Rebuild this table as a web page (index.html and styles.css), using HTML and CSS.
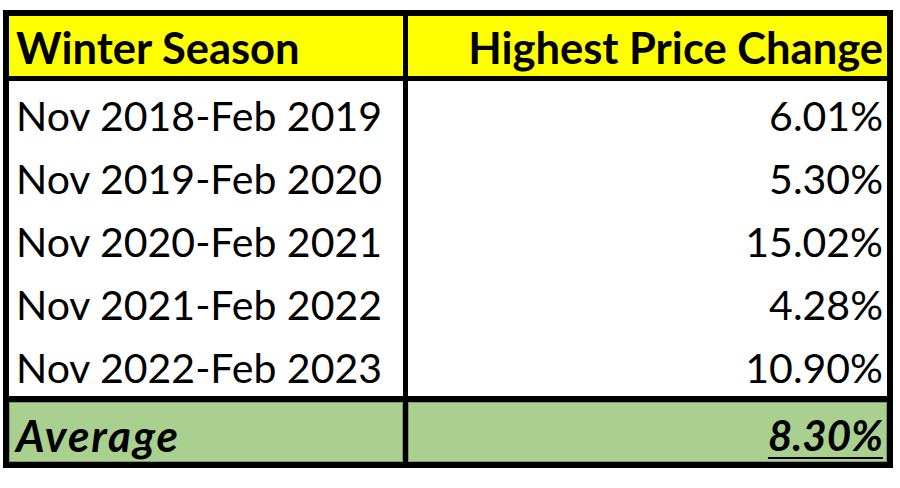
FILE: index.html
```html
<!DOCTYPE html>
<html>
<head>
<meta charset="utf-8">
<link rel="stylesheet" href="styles.css">
</head>
<body>
<div class="sheet">
  <div class="cell head left">Winter Season</div>
  <div class="cell head right">Highest Price Change</div>

  <div class="cell data left">Nov 2018-Feb 2019</div>
  <div class="cell data right">6.01%</div>
  <div class="cell data left">Nov 2019-Feb 2020</div>
  <div class="cell data right">5.30%</div>
  <div class="cell data left">Nov 2020-Feb 2021</div>
  <div class="cell data right">15.02%</div>
  <div class="cell data left">Nov 2021-Feb 2022</div>
  <div class="cell data right">4.28%</div>
  <div class="cell data left">Nov 2022-Feb 2023</div>
  <div class="cell data right">10.90%</div>

  <div class="cell avg left"><span class="avg-label">Average</span></div>
  <div class="cell avg right"><span class="ul">8.30%</span></div>
</div>
</body>
</html>
```

FILE: styles.css
```css
html, body {
  margin: 0;
  padding: 0;
  background: #ffffff;
}

body {
  padding: 10px 0 0 3px;
  font-family: "Lato", "Open Sans", sans-serif;
  color: #000;
}

.sheet {
  display: inline-grid;
  grid-template-columns: 394px 479px;
  column-gap: 5px;
  background: #000;
  border: 6px solid #000;
}

.cell {
  display: flex;
  align-items: center;
  box-sizing: border-box;
  font-size: 41px;
  line-height: 1;
  padding-top: 6px;
  white-space: nowrap;
}

.left {
  justify-content: flex-start;
  padding-left: 7px;
}

.right {
  justify-content: flex-end;
  padding-right: 4px;
}

.head {
  background: #ffff00;
  height: 60px;
  margin-bottom: 5px;
  font-weight: 700;
  font-size: 43.5px;
  padding-top: 4px;
}

.data {
  background: #ffffff;
  height: 63px;
}

.avg {
  background: #a9d08e;
  height: 60px;
  margin-top: 6px;
  font-weight: 700;
  font-style: italic;
  font-size: 42px;
  box-shadow: inset 0 0 0 1px #7f9a6e;
}

.avg-label {
  font-size: 44px;
  letter-spacing: 2px;
}

.ul {
  text-decoration: underline;
  text-decoration-thickness: 2px;
  text-underline-offset: 6px;
}
```
